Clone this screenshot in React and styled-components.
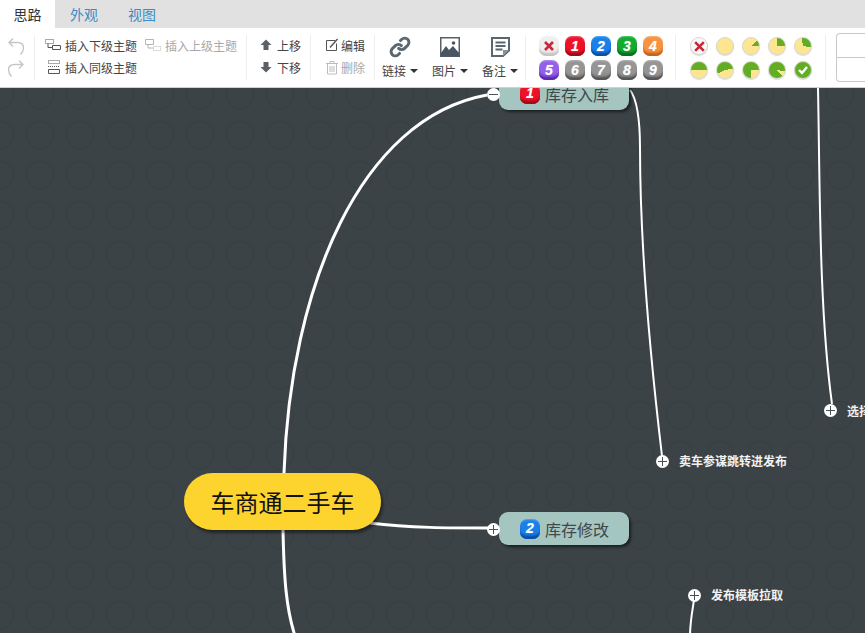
import React from 'react';
import styled, { createGlobalStyle } from 'styled-components';

const G = createGlobalStyle`
  html, body { margin: 0; padding: 0; width: 865px; height: 633px; overflow: hidden; }
  body { font-family: "Liberation Sans", "Noto Sans CJK SC", sans-serif; }
`;
const Page = styled.div`width: 865px; height: 633px; display: flex; flex-direction: column; overflow: hidden;`;
const TabBar = styled.div`height: 28px; background: #e1e1e1; display: flex; flex: none;`;
const Tab = styled.div`
  width: ${p => p.$w}px; display: flex; align-items: center; justify-content: center;
  font-size: 14px; color: ${p => p.$active ? '#333' : '#3b8cc4'};
  background: ${p => p.$active ? '#fff' : 'transparent'};
  font-family: "Noto Sans CJK SC", sans-serif;
`;
const Tools = styled.div`
  height: 59px; flex: none; background: #fff; border-bottom: 1px solid #d0d0d0;
  display: flex; align-items: center; overflow: hidden;
`;
const Group = styled.div`
  height: 45px; width: ${p => p.$w}px; flex: none; box-sizing: border-box;
  border-right: 1px solid #eeeeee;
`;
const Rows = styled(Group)`display: flex; flex-direction: column; gap: 2px; padding: 0 0 0 ${p => p.$pl}px;`;
const Line = styled.div`display: flex; align-items: center; height: 20px; gap: ${p => p.$gap || 0}px;`;
const Action = styled.div`
  display: flex; align-items: center; gap: ${p => p.$gap || 4}px; font-size: 12px; height: 20px;
  color: ${p => p.$off ? '#a8a8a8' : '#444'};
  font-family: "Noto Sans CJK SC", sans-serif;
`;
const Undo = styled(Group)`display: flex; flex-direction: column; align-items: center; justify-content: center; gap: 3px; padding-right: 3px;`;
const BigGroup = styled(Group)`display: flex;`;
const Big = styled.div`
  width: 50px; flex: none; display: flex; flex-direction: column; align-items: center; justify-content: center;
  font-size: 12px; color: #444; gap: 4px; font-family: "Noto Sans CJK SC", sans-serif;
`;
const BigIcon = styled.div`height: 22px; display: flex; align-items: center; justify-content: center;`;
const BigLabel = styled.div`display: flex; align-items: center; gap: 4px; height: 17px; white-space: nowrap;`;
const Caret = styled.span`width: 0; height: 0; border-left: 4px solid transparent; border-right: 4px solid transparent; border-top: 4px solid #333;`;
const BadgeGrid = styled(Group)`
  display: grid; grid-template-columns: repeat(5, 20px); grid-auto-rows: 20px; gap: 4px 6px; align-content: start; padding: 1px 0 0 13px;
`;
const Badge = styled.div`
  width: 20px; height: 20px; border-radius: 7px; display: flex; align-items: center; justify-content: center;
  background: linear-gradient(${p => p.$c1}, ${p => p.$c1} 60%, ${p => p.$c3 || p.$c1});
  box-shadow: inset 0 -4px 2px -1px ${p => p.$c2}, inset 0 2px 2px -1px rgba(255,255,255,.3);
  color: #fff; font: italic bold 14px "Liberation Sans", sans-serif; text-shadow: 0 0 1px rgba(255,255,255,.5);
`;
const PieGrid = styled(Group)`
  display: grid; grid-template-columns: repeat(5, 18px); grid-auto-rows: 18px; gap: 6px 8px; align-content: start; padding: 2px 0 0 14px;
`;
const Pie = styled.div`
  width: 18px; height: 18px; border-radius: 50%; box-sizing: border-box;
  border: 1px solid #d8d8cc; box-shadow: 0 1px 1px rgba(0,0,0,.15);
  background: ${p => p.$bg};
  display: flex; align-items: center; justify-content: center;
`;
const StyleBox = styled.div`
  width: 60px; height: 49px; margin-left: 10px; flex: none; box-sizing: border-box;
  border: 1px solid #c9c9c9; border-right: 0; border-radius: 4px 0 0 4px;
  display: flex; flex-direction: column;
`;
const StyleCell = styled.div`flex: 1; & + & { border-top: 1px solid #c9c9c9; }`;
const Canvas = styled.div`
  flex: 1; position: relative; overflow: hidden; background-color: #3c4346;
  background-image:
    radial-gradient(circle at 20px 20px, transparent 12.5px, rgba(0,0,0,.08) 13.5px, transparent 14.5px);
  background-size: 40px 40px;
  background-position: -20px -13px;
`;
const Links = styled.svg`position: absolute; left: 0; top: 0;`;
const Root = styled.div`
  position: absolute; left: 184px; top: 385px; width: 197px; height: 57px; border-radius: 29px;
  background: #fdd42e; box-shadow: 2px 3px 3px rgba(0,0,0,.45);
  display: flex; align-items: center; justify-content: center;
  font-size: 24px; color: #111; font-family: "Noto Sans CJK SC", sans-serif;
`;
const Topic = styled.div`
  position: absolute; left: 499px; top: ${p => p.$top}px; width: 130px; height: 33px; border-radius: 9px;
  background: #a4c5c0; box-shadow: 2px 2px 3px rgba(0,0,0,.55);
  display: flex; align-items: center; gap: 5px; padding-left: 21px; box-sizing: border-box;
  font-size: 16px; color: #40484a; font-family: "Noto Sans CJK SC", sans-serif;
`;
const TopicBadge = styled(Badge)`padding-bottom: 2px; box-sizing: border-box;`;
const Leaf = styled.div`
  position: absolute; left: ${p => p.$x}px; top: ${p => p.$y}px; height: 16px; line-height: 16px; white-space: nowrap;
  font-size: 12px; font-weight: 700; color: #f2f2f2; font-family: "Noto Sans CJK SC", sans-serif;
`;
const Expander = styled.div`
  position: absolute; left: ${p => p.$x - 6}px; top: ${p => p.$y - 6}px; width: 13px; height: 13px; border-radius: 50%;
  background: #fff;
  &::before { content: ''; position: absolute; left: 2px; right: 2px; top: 6px; height: 1px; background: #4a5054; }
  &::after { display: ${p => p.$minus ? 'none' : 'block'}; content: ''; position: absolute; top: 2px; bottom: 2px; left: 6px; width: 1px; background: #4a5054; }
`;

const IconSub = () => (
  <svg width="16" height="14" viewBox="0 0 16 14" fill="none" stroke="#555">
    <path d="M.5 1.500h8v4h-8z" strokeDasharray="1 1"/><path d="M7.500 7.500h8v4h-8z"/><path d="M3 5.500v4h4.500"/>
  </svg>
);
const IconParent = () => (
  <svg width="16" height="14" viewBox="0 0 16 14" fill="none" stroke="#b5b5b5">
    <path d="M.5 1.500h8v5h-8z"/><path d="M3 6.500v3.500h5"/><path d="M8.500 8.500h7v4h-7z" strokeDasharray="1 1"/>
  </svg>
);
const IconSibling = () => (
  <svg width="16" height="14" viewBox="0 0 16 14" fill="none" stroke="#555">
    <path d="M3.500 .5h11v3h-11z" strokeDasharray="1 1"/><path d="M3 6.500h12" strokeDasharray="1 1"/><path d="M3.500 9.500h11v4h-11z"/>
  </svg>
);
const IconUndo = ({ redo }) => (
  <svg width="18" height="19" viewBox="0 0 18 19" fill="none" stroke="#c6c6c6" strokeWidth="1.400">
    {redo
      ? <path d="M16 5.500H7.500C3.500 5.500 1.500 8 1.500 11c0 2.500 1 4.500 3 6.500M12 1.500l4 4-4 4" />
      : <path d="M2 5.500h8.500c4 0 6 2.500 6 5.500 0 2.500-1 4.500-3 6.500M6 1.500l-4 4 4 4" />}
  </svg>
);
const IconArrow = ({ down }) => (
  <svg width="12" height="12" viewBox="0 0 12 12" fill="#5b6066">
    <path d={down ? 'M3.500 1h5v5H11.500L6 11.500.5 6h3z' : 'M3.500 11h5V6H11.500L6 .5.5 6h3z'} />
  </svg>
);
const IconEdit = () => (
  <svg width="14" height="14" viewBox="0 0 14 14" fill="none" stroke="#555">
    <path d="M10 2.500H1.500v10h10V5.500"/><path d="M5 9.500 12.500 1" strokeWidth="1.400"/>
  </svg>
);
const IconTrash = () => (
  <svg width="14" height="15" viewBox="0 0 14 15" fill="none" stroke="#bdbdbd">
    <path d="M1 3.500h12M5 3.500v-2h4v2M2.500 3.500v10.500h9V3.500M5 6v6M7 6v6M9 6v6"/>
  </svg>
);
const IconLink = () => (
  <svg width="22" height="22" viewBox="0 0 24 24" fill="none" stroke="#5a6670" strokeWidth="3.200" strokeLinecap="round">
    <path d="M10.500 13.500a4.500 4.500 0 0 0 6.500 0l3.500-3.500a4.600 4.600 0 0 0-6.500-6.500L12.500 5"/>
    <path d="M13.500 10.500a4.500 4.500 0 0 0-6.500 0L3.500 14a4.600 4.600 0 0 0 6.500 6.500l1.500-1.500"/>
  </svg>
);
const IconImage = () => (
  <svg width="20" height="20" viewBox="0 0 20 20">
    <rect x=".75" y=".75" width="18.500" height="18.500" fill="#fff" stroke="#55606c" strokeWidth="1.500"/>
    <path d="M1 16l5-7 3 4 2-2 2-2 6 7z" fill="#4a5562"/><rect x="1" y="15.500" width="18" height="4" fill="#4a5562"/>
    <circle cx="13.500" cy="6" r="1.800" fill="#4a5562"/>
  </svg>
);
const IconNote = () => (
  <svg width="19" height="20" viewBox="0 0 19 20" fill="none" stroke="#5a6672">
    <path d="M1 1h17v12.500L12 19H1z" strokeWidth="2"/>
    <path d="M4.500 5.500h10M4.500 9h10M4.500 12.500h7" strokeWidth="1.800"/>
    <path d="M12 19v-6h6z" fill="#8a929a" stroke="none"/>
  </svg>
);
const CrossMark = ({ size, w }) => (
  <svg width={size} height={size} viewBox="0 0 12 12" fill="none" stroke="#c8283a" strokeWidth={w}>
    <path d="M2 2l8 8M10 2l-8 8"/>
  </svg>
);
const CheckMark = () => (
  <svg width="12" height="12" viewBox="0 0 12 12" fill="none" stroke="#fff" strokeWidth="2.400">
    <path d="M2 6l3 3 5-6"/>
  </svg>
);

const grayB = ['#959595', '#555', '#808080'];
const badges = [
  ['#efefef', '#c4c4c4', '#e4e4e4', 'x'], ['#ee1128', '#9f0a1c', '#d80e22', '1'], ['#1a80e8', '#0a4fa8', '#1268d0', '2'], ['#12ab30', '#07701c', '#0b9226', '3'], ['#f79240', '#c6641b', '#ec8030', '4'],
  ['#9560e8', '#5a2ab0', '#7c45d8', '5'], [...grayB, '6'], [...grayB, '7'], [...grayB, '8'], [...grayB, '9'],
];
const Y = '#fde68f'; const Gr = '#62ad24';
const arc = (from, span) => `conic-gradient(from ${from}deg, ${Gr} 0 ${span}deg, ${Y} ${span}deg 360deg)`;
const pies = [
  ['#f8f8f8', 'x'], [Y], [arc(50, 40)], [arc(0, 90)], [arc(350, 110)],
  [arc(270, 180)], [arc(245, 195)], [arc(180, 270)], [arc(135, 325)], [Gr, 'c'],
];

const expanders = [[493, 6, true], [493, 441], [662, 373], [694, 507], [830, 322]];
const leaves = [[679, 365, '卖车参谋跳转进发布'], [711, 499, '发布模板拉取'], [847, 315, '选择']];

export default function App() {
  return (
    <Page>
      <G />
      <TabBar>
        <Tab $w={55} $active>思路</Tab>
        <Tab $w={58}>外观</Tab>
        <Tab $w={58}>视图</Tab>
      </TabBar>
      <Tools>
        <Undo $w={35}><IconUndo /><IconUndo redo /></Undo>
        <Rows $w={212} $pl={10}>
          <Line $gap={8}>
            <Action><IconSub />插入下级主题</Action>
            <Action $off><IconParent />插入上级主题</Action>
          </Line>
          <Line><Action><IconSibling />插入同级主题</Action></Line>
        </Rows>
        <Rows $w={64} $pl={13}>
          <Line><Action $gap={5}><IconArrow />上移</Action></Line>
          <Line><Action $gap={5}><IconArrow down />下移</Action></Line>
        </Rows>
        <Rows $w={64} $pl={14}>
          <Line><Action $gap={2}><IconEdit />编辑</Action></Line>
          <Line><Action $gap={2} $off><IconTrash />删除</Action></Line>
        </Rows>
        <BigGroup $w={151}>
          <Big><BigIcon><IconLink /></BigIcon><BigLabel>链接<Caret /></BigLabel></Big>
          <Big><BigIcon><IconImage /></BigIcon><BigLabel>图片<Caret /></BigLabel></Big>
          <Big><BigIcon><IconNote /></BigIcon><BigLabel>备注<Caret /></BigLabel></Big>
        </BigGroup>
        <BadgeGrid $w={150}>
          {badges.map(([a, b, c, t], i) => (
            <Badge key={i} $c1={a} $c2={b} $c3={c}>{t === 'x' ? <CrossMark size={12} w={2.600} /> : t}</Badge>
          ))}
        </BadgeGrid>
        <PieGrid $w={150}>
          {pies.map(([bg, m], i) => (
            <Pie key={i} $bg={bg}>
              {m === 'x' && <CrossMark size={13} w={2.400} />}
              {m === 'c' && <CheckMark />}
            </Pie>
          ))}
        </PieGrid>
        <StyleBox><StyleCell /><StyleCell /></StyleBox>
      </Tools>
      <Canvas>
        <Links width="865" height="545" viewBox="0 0 865 545" fill="none" stroke="#fff">
          <path d="M284 385 C290 200 360 30 487 7" strokeWidth="3" />
          <path d="M283 442 C284 490 286 520 295 548" strokeWidth="3" />
          <path d="M370 435 C410 440 450 440 488 440" strokeWidth="3" />
          <path d="M630 2 C636 10 640 28 640 60 C640 150 648 250 662 368" strokeWidth="2" />
          <path d="M818 0 C820 100 819 220 832 316" strokeWidth="2" />
          <path d="M694 512 C692 525 690 535 690 548" strokeWidth="2" />
        </Links>
        <Topic $top={-11}><TopicBadge $c1="#ee1128" $c2="#9f0a1c" $c3="#d80e22">1</TopicBadge>库存入库</Topic>
        <Topic $top={424}><TopicBadge $c1="#1a80e8" $c2="#0a4fa8" $c3="#1268d0">2</TopicBadge>库存修改</Topic>
        <Root>车商通二手车</Root>
        {expanders.map(([x, y, m], i) => <Expander key={i} $x={x} $y={y} $minus={m} />)}
        {leaves.map(([x, y, t], i) => <Leaf key={i} $x={x} $y={y}>{t}</Leaf>)}
      </Canvas>
    </Page>
  );
}
